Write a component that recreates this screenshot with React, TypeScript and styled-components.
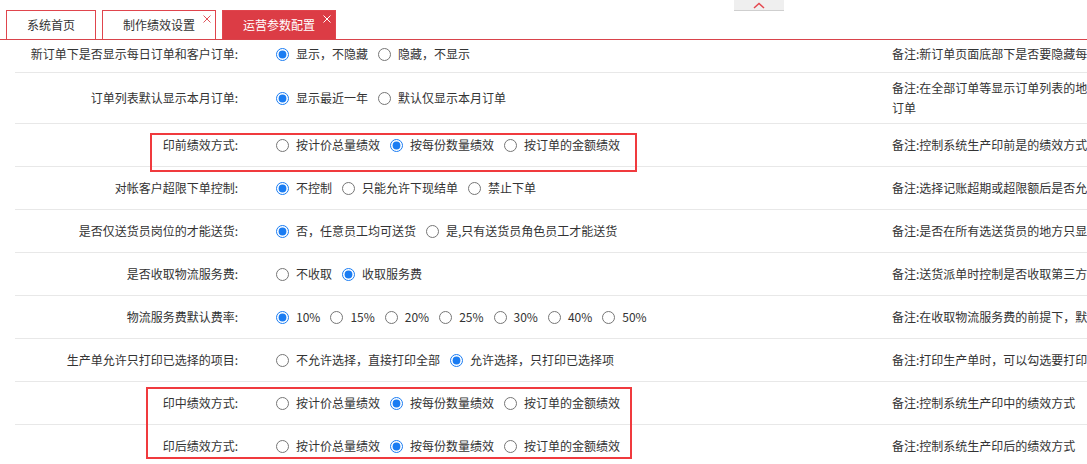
import React from "react";
import styled, { createGlobalStyle } from "styled-components";

type Setting = {
  label: string;
  options: string[];
  checked: number;
  note: string[];
};

const tabs = [
  { title: "系统首页", closable: false, active: false },
  { title: "制作绩效设置", closable: true, active: false },
  { title: "运营参数配置", closable: true, active: true },
];

const perfOptions = ["按计价总量绩效", "按每份数量绩效", "按订单的金额绩效"];

const settings: Setting[] = [
  {
    label: "新订单下是否显示每日订单和客户订单:",
    options: ["显示，不隐藏", "隐藏，不显示"],
    checked: 0,
    note: ["备注:新订单页面底部下是否要隐藏每日订单和客户订单"],
  },
  {
    label: "订单列表默认显示本月订单:",
    options: ["显示最近一年", "默认仅显示本月订单"],
    checked: 0,
    note: ["备注:在全部订单等显示订单列表的地方默认显示最近一年还是本月", "订单"],
  },
  {
    label: "印前绩效方式:",
    options: perfOptions,
    checked: 1,
    note: ["备注:控制系统生产印前是的绩效方式"],
  },
  {
    label: "对帐客户超限下单控制:",
    options: ["不控制", "只能允许下现结单", "禁止下单"],
    checked: 0,
    note: ["备注:选择记账超期或超限额后是否允许下单"],
  },
  {
    label: "是否仅送货员岗位的才能送货:",
    options: ["否，任意员工均可送货", "是,只有送货员角色员工才能送货"],
    checked: 0,
    note: ["备注:是否在所有选送货员的地方只显示送货员角色的员工"],
  },
  {
    label: "是否收取物流服务费:",
    options: ["不收取", "收取服务费"],
    checked: 1,
    note: ["备注:送货派单时控制是否收取第三方物流服务费"],
  },
  {
    label: "物流服务费默认费率:",
    options: ["10%", "15%", "20%", "25%", "30%", "40%", "50%"],
    checked: 0,
    note: ["备注:在收取物流服务费的前提下，默认的服务费率"],
  },
  {
    label: "生产单允许只打印已选择的项目:",
    options: ["不允许选择，直接打印全部", "允许选择，只打印已选择项"],
    checked: 1,
    note: ["备注:打印生产单时，可以勾选要打印的项目"],
  },
  {
    label: "印中绩效方式:",
    options: perfOptions,
    checked: 1,
    note: ["备注:控制系统生产印中的绩效方式"],
  },
  {
    label: "印后绩效方式:",
    options: perfOptions,
    checked: 1,
    note: ["备注:控制系统生产印后的绩效方式"],
  },
];

const CloseIcon = ({ color }: { color: string }) => (
  <CloseSvg viewBox="0 0 8 8" width="8" height="8">
    <path d="M0.5 0.5 L7.5 7.5 M7.5 0.5 L0.5 7.5" stroke={color} strokeWidth="1" fill="none" />
  </CloseSvg>
);

export default function App() {
  return (
    <Page>
      <GlobalStyle />
      <CollapseHandle>
        <svg width="12" height="7" viewBox="0 0 12 7">
          <path d="M1 6 L6 1.5 L11 6" stroke="#e4474f" strokeWidth="1.5" fill="none" />
        </svg>
      </CollapseHandle>

      <TabBar>
        {tabs.map((t) => (
          <Tab key={t.title} $active={t.active}>
            {t.title}
            {t.closable && <CloseIcon color={t.active ? "#ffffff" : "#e0525a"} />}
          </Tab>
        ))}
      </TabBar>

      <Viewport>
        <SettingList>
          {settings.map((s, i) => (
            <Row key={s.label}>
              <Label>{s.label}</Label>
              <Options>
                {s.options.map((o, j) => (
                  <Option key={o}>
                    <Radio type="radio" name={`setting-${i}`} defaultChecked={j === s.checked} />
                    <span>{o}</span>
                  </Option>
                ))}
              </Options>
              <Note>
                {s.note.map((line) => (
                  <div key={line}>{line}</div>
                ))}
              </Note>
            </Row>
          ))}
        </SettingList>

        <Highlight $top={93} $left={150} $width={487} $height={39} />
        <Highlight $top={347} $left={146} $width={486} $height={72} />
      </Viewport>
    </Page>
  );
}

const GlobalStyle = createGlobalStyle`
  html, body {
    margin: 0;
    padding: 0;
    background: #fff;
    overflow: hidden;
  }

  body {
    font-family: "Noto Sans CJK SC", "Noto Sans", sans-serif;
    font-size: 12px;
    color: #333;
  }
`;

const Page = styled.div`
  position: relative;
  width: 1087px;
  height: 464px;
  overflow: hidden;
`;

const CollapseHandle = styled.div`
  position: absolute;
  top: 0;
  left: 734px;
  width: 50px;
  height: 11px;
  box-sizing: border-box;
  background: #efefef;
  border-bottom: 1px solid #cfcfcf;

  display: flex;
  justify-content: center;
  align-items: center;
`;

const TabBar = styled.div`
  display: flex;
  align-items: flex-end;
  gap: 6px;

  padding: 10px 0 0 6px;
  border-bottom: 1px solid #d9434b;
`;

const Tab = styled.div<{ $active?: boolean }>`
  position: relative;
  box-sizing: border-box;
  height: 29px;
  padding: 0 20px;

  border: 1px solid #e0454d;
  border-bottom: none;
  background: ${(p) => (p.$active ? "#dc3c45" : "#fff")};
  color: ${(p) => (p.$active ? "#fff" : "#333")};

  font-size: 12px;
  line-height: 28px;
  white-space: nowrap;
`;

const CloseSvg = styled.svg`
  position: absolute;
  top: 4px;
  right: 4px;
`;

const Viewport = styled.div`
  position: relative;
  height: 424px;
  overflow: hidden;
`;

// the list is scrolled a little: the first row is partly hidden under the tabs
const SettingList = styled.div`
  margin-top: -7px;
`;

const Row = styled.div`
  display: grid;
  grid-template-columns: 225px 652px minmax(0, 1fr);
  align-items: center;

  margin-left: 15px;
  padding: 5px 0;
  border-bottom: 1px solid #e8e8e8;

  &:first-child {
    padding-bottom: 2px;
  }
`;

const Label = styled.div`
  padding-right: 2px;
  text-align: right;
  line-height: 32px;
  white-space: nowrap;
`;

const Options = styled.div`
  display: flex;
  align-items: center;
  height: 32px;
  padding-left: 36px;
`;

const Option = styled.label`
  display: inline-flex;
  align-items: center;
  margin-right: 10px;
  white-space: nowrap;
  line-height: 20px;
`;

const Radio = styled.input`
  width: 13px;
  height: 13px;
  margin: 0 7px 0 0;
  accent-color: #1a7cf2;
`;

const Note = styled.div`
  line-height: 20px;
  white-space: nowrap;
`;

const Highlight = styled.div<{ $top: number; $left: number; $width: number; $height: number }>`
  position: absolute;
  top: ${(p) => p.$top}px;
  left: ${(p) => p.$left}px;
  width: ${(p) => p.$width}px;
  height: ${(p) => p.$height}px;
  box-sizing: border-box;
  border: 2px solid #f03a3e;
  pointer-events: none;
`;
